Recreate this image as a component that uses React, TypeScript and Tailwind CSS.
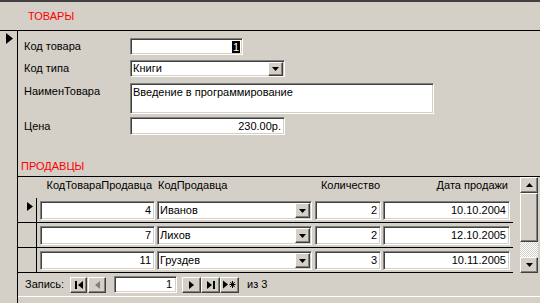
import React from 'react'

const sunken =
  'bg-white border border-t-[#808080] border-l-[#808080] border-b-white border-r-white shadow-[inset_1px_1px_0_#404040,inset_-1px_-1px_0_#d4d0c8]'
const raised =
  'bg-[#d4d0c8] border border-t-white border-l-white border-b-[#404040] border-r-[#404040] shadow-[inset_-1px_-1px_0_#808080]'

function DownArrow() {
  return (
    <svg width="7" height="4" viewBox="0 0 7 4">
      <polygon points="0,0 7,0 3.5,4" fill="#000" />
    </svg>
  )
}

function ComboButton({ className = '' }: { className?: string }) {
  return (
    <div className={`${raised} flex items-center justify-center ${className}`}>
      <DownArrow />
    </div>
  )
}

function NavButton({ children, w = 'w-[18px]' }: { children: React.ReactNode; w?: string }) {
  return <div className={`${raised} ${w} h-[16px] flex items-center justify-center`}>{children}</div>
}

const rows = [
  { id: '4', seller: 'Иванов', qty: '2', date: '10.10.2004' },
  { id: '7', seller: 'Лихов', qty: '2', date: '12.10.2005' },
  { id: '11', seller: 'Груздев', qty: '3', date: '10.11.2005' },
]

export default function App() {
  return (
    <div className="w-[540px] h-[303px] bg-[#d4d0c8] overflow-hidden flex flex-col border-t-2 border-[#404040] text-[11px] leading-[13px] text-black font-['Liberation_Sans',Arial,sans-serif]">
      <div className="h-[29px] shrink-0 border-b border-black flex items-center pl-[28px] text-[#ff0000]">ТОВАРЫ</div>

      <div className="flex-1 flex">
        {/* record selector of the main form */}
        <div className="w-[18px] shrink-0 border-r border-black pt-[2px] pl-[6px]">
          <svg width="7" height="11" viewBox="0 0 7 11">
            <polygon points="0,0 7,5.5 0,11" fill="#000" />
          </svg>
        </div>

        <div className="flex-1 flex flex-col">
          <div className="flex flex-col pl-[6px] pt-[7px]">
            <div className="flex items-center h-[17px]">
              <div className="w-[106px]">Код товара</div>
              <div className={`${sunken} w-[113px] h-[17px] flex items-center justify-end pr-[2px]`}>
                <span className="bg-black text-white px-[1px] leading-[12px]">1</span>
              </div>
            </div>
            <div className="flex items-center h-[17px] mt-[5px]">
              <div className="w-[106px]">Код типа</div>
              <div className={`${sunken} w-[155px] h-[17px] flex items-center pl-[2px] pr-[1px]`}>
                <span className="flex-1">Книги</span>
                <ComboButton className="w-[15px] h-[14px]" />
              </div>
            </div>
            <div className="flex items-start mt-[6px]">
              <div className="w-[106px] pt-[2px]">НаименТовара</div>
              <div className={`${sunken} w-[304px] h-[31px] pl-[2px] pt-[2px]`}>Введение в программирование</div>
            </div>
            <div className="flex items-center h-[18px] mt-[3px]">
              <div className="w-[106px]">Цена</div>
              <div className={`${sunken} w-[155px] h-[18px] flex items-center justify-end pr-[3px]`}>230.00р.</div>
            </div>
          </div>

          <div className="mt-[24px] pl-[3px] text-[#ff0000] leading-[14px]">ПРОДАВЦЫ</div>

          {/* subform */}
          <div className="mt-[3px] flex flex-col">
            <div className="flex border-t border-black">
              <div className="w-[495px] flex flex-col">
                <div className="h-[21px] flex pt-[2px]">
                  <div className="w-[19px]" />
                  <div className="ml-[3px] w-[115px] text-right pr-[3px]">КодТовараПродавца</div>
                  <div className="ml-[2px] w-[155px] pl-[1px]">КодПродавца</div>
                  <div className="ml-[3px] w-[66px] text-right pr-[1px]">Количество</div>
                  <div className="ml-[2px] w-[127px] text-right pr-[2px]">Дата продажи</div>
                </div>
                {rows.map((r, i) => (
                  <div key={r.id} className="h-[25px] flex border-b border-black">
                    <div className="w-[19px] border-r border-black pl-[9px] pt-[4px]">
                      {i === 0 && (
                        <svg width="6" height="9" viewBox="0 0 6 9">
                          <polygon points="0,0 6,4.5 0,9" fill="#000" />
                        </svg>
                      )}
                    </div>
                    <div className={`${sunken} ml-[3px] mt-[3px] w-[115px] h-[19px] flex items-center justify-end pr-[3px]`}>{r.id}</div>
                    <div className={`${sunken} ml-[2px] mt-[3px] w-[155px] h-[19px] flex items-center pl-[2px] pr-[1px]`}>
                      <span className="flex-1">{r.seller}</span>
                      <ComboButton className="w-[15px] h-[15px]" />
                    </div>
                    <div className={`${sunken} ml-[3px] mt-[3px] w-[66px] h-[19px] flex items-center justify-end pr-[3px]`}>{r.qty}</div>
                    <div className={`${sunken} ml-[2px] mt-[3px] w-[127px] h-[19px] flex items-center justify-end pr-[3px]`}>{r.date}</div>
                  </div>
                ))}
              </div>

              {/* scrollbar */}
              <div className="ml-auto mr-[2px] w-[18px] h-[96px] flex flex-col">
                <div className={`${raised} h-[16px] flex items-center justify-center`}>
                  <svg width="7" height="4" viewBox="0 0 7 4">
                    <polygon points="3.5,0 7,4 0,4" fill="#000" />
                  </svg>
                </div>
                <div className={`${raised} h-[49px]`} />
                <div className="flex-1 bg-[repeating-conic-gradient(#ffffff_0_25%,#d4d0c8_0_50%)] bg-[length:2px_2px]" />
                <div className={`${raised} h-[16px] flex items-center justify-center`}>
                  <DownArrow />
                </div>
              </div>
            </div>

            {/* navigation bar */}
            <div className="h-[24px] flex items-center pl-[7px] border-b border-white">
              <div className="w-[45px]">Запись:</div>
              <NavButton w="w-[17px]">
                <svg width="8" height="8" viewBox="0 0 8 8">
                  <rect x="0" y="0" width="2" height="8" fill="#000" />
                  <polygon points="8,0 8,8 3,4" fill="#000" />
                </svg>
              </NavButton>
              <div className="ml-[1px]">
                <NavButton>
                  <svg width="5" height="8" viewBox="0 0 5 8">
                    <polygon points="5,0 5,8 0,4" fill="#808080" />
                  </svg>
                </NavButton>
              </div>
              <div className={`${sunken} ml-[8px] w-[63px] h-[17px] flex items-center justify-end pr-[4px]`}>1</div>
              <div className="ml-[5px]">
                <NavButton w="w-[19px]">
                  <svg width="5" height="8" viewBox="0 0 5 8">
                    <polygon points="0,0 5,4 0,8" fill="#000" />
                  </svg>
                </NavButton>
              </div>
              <NavButton w="w-[19px]">
                <svg width="8" height="8" viewBox="0 0 8 8">
                  <polygon points="0,0 5,4 0,8" fill="#000" />
                  <rect x="6" y="0" width="2" height="8" fill="#000" />
                </svg>
              </NavButton>
              <NavButton w="w-[19px]">
                <svg width="13" height="9" viewBox="0 0 13 9">
                  <polygon points="0,0.5 5,4.5 0,8.5" fill="#000" />
                  <path d="M9.5 1 V8 M6.5 4.5 H12.5 M7.3 2 L11.7 7 M11.7 2 L7.3 7" stroke="#000" strokeWidth="1" />
                </svg>
              </NavButton>
              <div className="ml-[8px]">из 3</div>
            </div>
          </div>
        </div>
      </div>
    </div>
  )
}
